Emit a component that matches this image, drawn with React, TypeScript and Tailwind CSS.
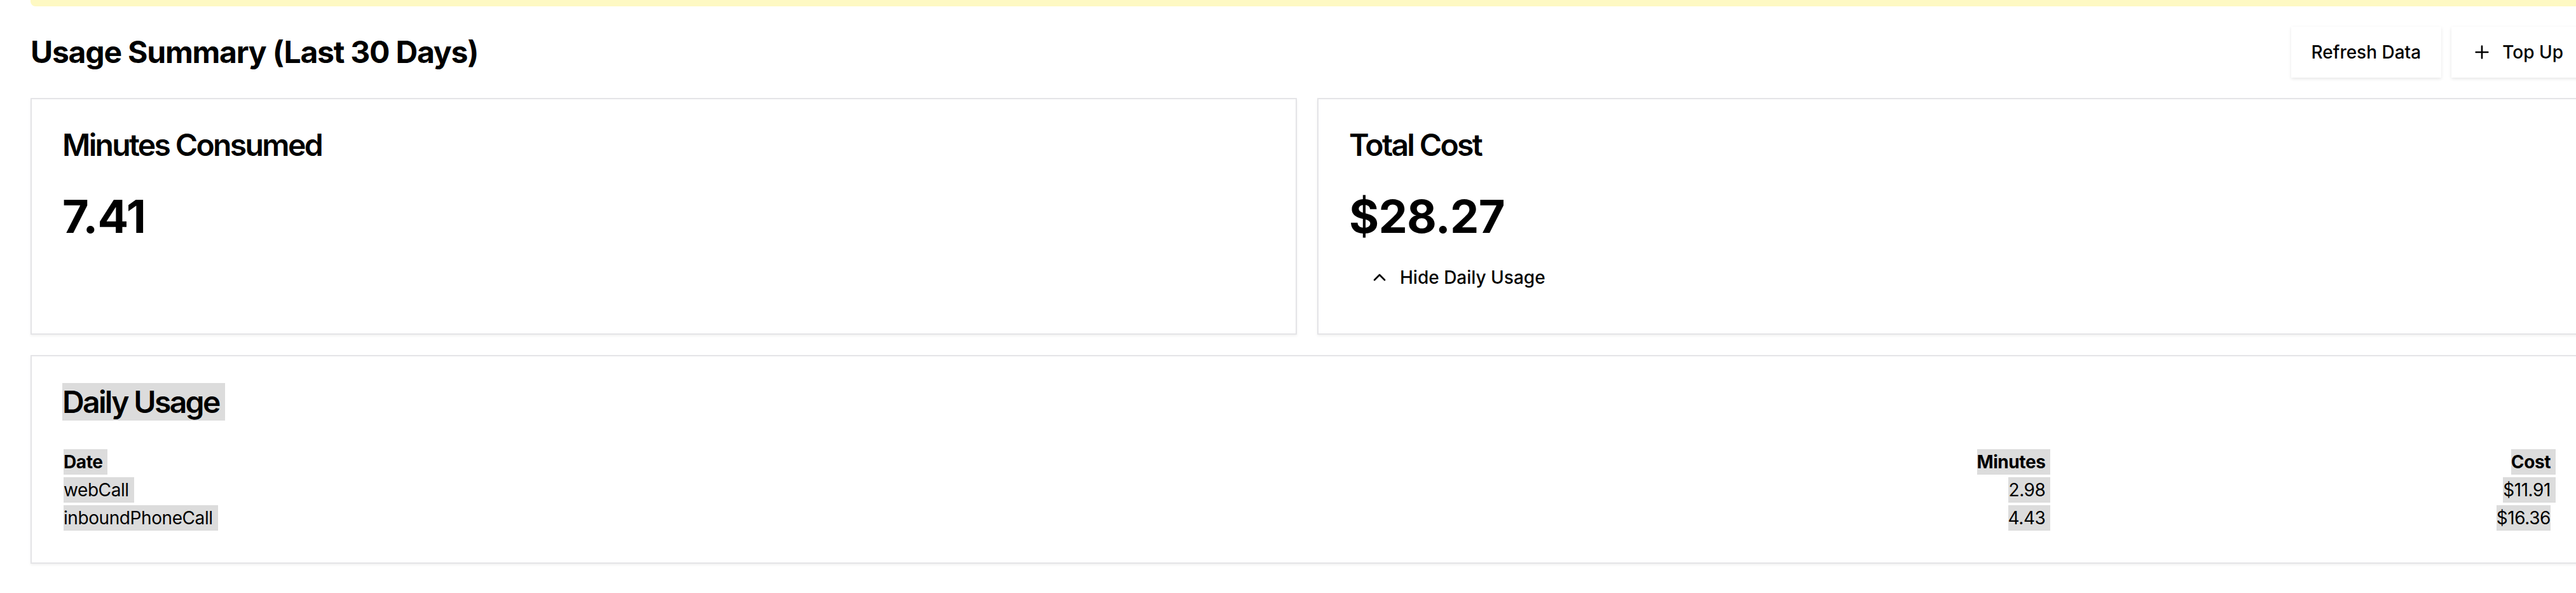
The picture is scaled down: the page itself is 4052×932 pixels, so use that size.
import React from 'react';
import { ChevronUp, Plus } from 'lucide-react';

const rows = [
  { date: 'webCall', minutes: '2.98', cost: '$11.91' },
  { date: 'inboundPhoneCall', minutes: '4.43', cost: '$16.36' },
];

// mimics the grey text-selection boxes seen in the screenshot
const Sel: React.FC<{ children: React.ReactNode; tail?: boolean }> = ({ children, tail = true }) => (
  <span className={`bg-[#dcdcdc] py-[3px] ${tail ? 'pr-[8px] -mr-[8px]' : ''}`}>{children}</span>
);

const Card: React.FC<{ children: React.ReactNode; className?: string }> = ({ children, className = '' }) => (
  <div className={`border-2 border-[#e4e4e7] bg-white shadow-[0_2px_4px_rgba(0,0,0,0.06)] ${className}`}>
    {children}
  </div>
);

const CardTitle: React.FC<{ children: React.ReactNode }> = ({ children }) => (
  <div className="p-12">
    <h3 className="text-[48px] font-semibold leading-none tracking-[-0.055em]">{children}</h3>
  </div>
);

export default function App() {
  return (
    <div className="w-[4112px] min-h-[932px] bg-white px-12 text-black font-['Inter',sans-serif]">
      {/* notice banner, mostly scrolled away */}
      <div className="h-[10px] rounded-b-lg bg-[#fef9c3]" />

      <div className="mt-8 flex items-center justify-between">
        <h2 className="text-[48px] font-bold leading-[64px] tracking-[-0.025em]">Usage Summary (Last 30 Days)</h2>
        <div className="flex gap-4">
          <button className="h-20 bg-white px-8 text-[28px] font-medium shadow-[0_2px_5px_rgba(0,0,0,0.1)]">
            Refresh Data
          </button>
          <button className="flex h-20 items-center bg-white px-8 text-[28px] font-medium shadow-[0_2px_5px_rgba(0,0,0,0.1)]">
            <Plus className="mr-4 h-8 w-8" strokeWidth={2} />
            Top Up
          </button>
        </div>
      </div>

      <div className="mt-8 grid grid-cols-2 gap-8">
        <Card>
          <CardTitle>Minutes Consumed</CardTitle>
          <div className="px-12 pb-12">
            <div className="text-[72px] font-bold leading-[80px] tracking-[-0.01em]">7.41</div>
          </div>
        </Card>
        <Card>
          <CardTitle>Total Cost</CardTitle>
          <div className="px-12 pb-12">
            <div className="text-[72px] font-bold leading-[80px] tracking-[-0.01em]">$28.27</div>
            <button className="mt-4 flex h-20 items-center px-8 text-[28px] font-medium">
              <ChevronUp className="mr-4 h-8 w-8" strokeWidth={2} />
              Hide Daily Usage
            </button>
          </div>
        </Card>
      </div>

      <Card className="mt-8">
        <div className="p-12">
          <h3 className="text-[48px] font-semibold leading-none tracking-[-0.055em]">
            <span className="bg-[#dcdcdc] pr-[9px]">Daily Usage</span>
          </h3>
        </div>
        <div className="px-12 pb-12">
          <table className="w-full text-[28px] leading-[40px] tracking-[-0.015em]">
            <thead>
              <tr>
                <th className="p-[2px] text-left font-bold"><Sel>Date</Sel></th>
                <th className="p-[2px] text-right font-bold"><Sel>Minutes</Sel></th>
                <th className="p-[2px] text-right font-bold"><Sel>Cost</Sel></th>
              </tr>
            </thead>
            <tbody>
              {rows.map((r, i) => (
                <tr key={r.date}>
                  <td className="p-[2px] text-left"><Sel>{r.date}</Sel></td>
                  <td className="p-[2px] text-right"><Sel>{r.minutes}</Sel></td>
                  <td className="p-[2px] text-right"><Sel tail={i < rows.length - 1}>{r.cost}</Sel></td>
                </tr>
              ))}
            </tbody>
          </table>
        </div>
      </Card>
    </div>
  );
}
